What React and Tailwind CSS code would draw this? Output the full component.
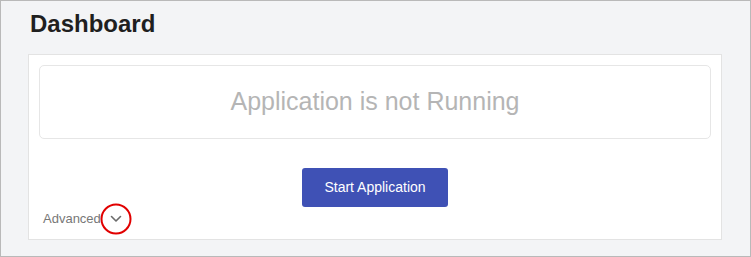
import React from 'react';

function Chevron() {
  return (
    <svg width="12" height="8" viewBox="0 0 12 8" fill="none">
      <path d="M1.5 1.5 L6 6 L10.5 1.5" stroke="#6b6b6b" strokeWidth="1.6" strokeLinecap="round" strokeLinejoin="round" />
    </svg>
  );
}

export default function App() {
  return (
    <div className="w-[751px] h-[257px] border border-[#b9b9b9] bg-[#f3f4f6] px-[27px] pt-[9px] font-['Liberation_Sans',Arial,sans-serif]">
      <h1 className="text-[24px] leading-[28px] font-bold text-[#1f1f1f] pl-[2px]">Dashboard</h1>

      <div className="mt-[16px] w-[694px] h-[186px] bg-white border border-[#e3e3e3] p-[10px] flex flex-col">
        <div className="h-[75px] border border-[#e6e6e6] rounded-[5px] flex items-center justify-center">
          <span className="text-[25px] text-[#b5b5b5]">Application is not Running</span>
        </div>

        <div className="flex justify-center mt-[29px]">
          <button className="w-[146px] h-[39px] bg-[#3f51b5] text-white text-[14px] rounded-[3px]">
            Start Application
          </button>
        </div>

        <div className="flex items-center h-[20px] mt-[2px] pl-[4px]">
          <span className="text-[13px] text-[#777777]">Advanced</span>
          <span className="relative ml-[9px] flex items-center">
            <Chevron />
            <span className="absolute left-1/2 top-1/2 -translate-x-1/2 -translate-y-1/2 w-[31px] h-[31px] rounded-full border-2 border-[#e10000]"></span>
          </span>
        </div>
      </div>
    </div>
  );
}
